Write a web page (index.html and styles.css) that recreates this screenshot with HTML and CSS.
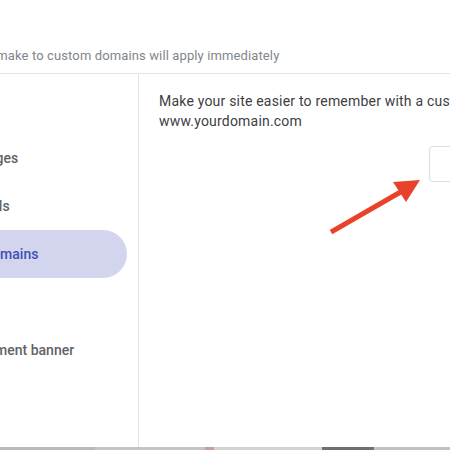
FILE: index.html
```html
<!DOCTYPE html>
<html lang="en">
<head>
<meta charset="utf-8">
<title>Custom domains</title>
<link rel="stylesheet" href="styles.css">
</head>
<body>
<div class="stage">
  <div class="dialog">
    <div class="dialog-header">
      <p class="notice">Changes you make to custom domains will apply immediately</p>
    </div>
    <div class="dialog-body">
      <nav class="sidebar">
        <a class="nav-item">Navigation</a>
        <a class="nav-item">Brand images</a>
        <a class="nav-item">Viewer tools</a>
        <a class="nav-item active">Custom domains</a>
        <a class="nav-item">Analytics</a>
        <a class="nav-item">Announcement banner</a>
      </nav>
      <section class="content">
        <p class="intro">Make your site easier to remember with a custom domain, like www.yourdomain.com</p>
        <div class="actions">
          <button class="setup-btn">Start setup</button>
        </div>
        <svg class="arrow" width="100" height="60" viewBox="0 0 100 60" aria-hidden="true">
          <line x1="1" y1="55" x2="74" y2="13" stroke="#e8432a" stroke-width="5" stroke-linecap="butt"/>
          <polygon points="90,3 63,5 76,25" fill="#e8432a"/>
        </svg>
      </section>
    </div>
  </div>
  <div class="backdrop-strip">
    <span class="seg seg-a"></span>
    <span class="seg seg-b"></span>
    <span class="seg seg-c"></span>
    <span class="seg seg-d"></span>
    <span class="seg seg-e"></span>
    <span class="seg seg-f"></span>
  </div>
</div>
</body>
</html>
```

FILE: styles.css
```css
html, body {
  margin: 0;
  padding: 0;
  width: 450px;
  height: 450px;
  overflow: hidden;
  background: #ffffff;
  font-family: Roboto, "Liberation Sans", Arial, sans-serif;
}

.stage {
  width: 450px;
  height: 450px;
  overflow: hidden;
  display: flex;
  flex-direction: column;
}

.dialog {
  flex: 0 0 447px;
  width: 667px;
  margin-left: -92px;
  background: #ffffff;
  display: flex;
  flex-direction: column;
}

.dialog-header {
  height: 74px;
  display: flex;
  align-items: flex-end;
  border-bottom: 1px solid #e3e3e3;
  box-sizing: border-box;
  padding-left: 9px;
}

.notice {
  margin: 0 0 8px 0;
  font-size: 13px;
  line-height: 18px;
  letter-spacing: 0.12px;
  color: #80868b;
  white-space: nowrap;
}

.dialog-body {
  flex: 1;
  display: flex;
}

.sidebar {
  width: 231px;
  flex: 0 0 231px;
  border-right: 1px solid #e3e3e3;
  box-sizing: border-box;
  padding-top: 12px;
  display: flex;
  flex-direction: column;
}

.nav-item {
  display: flex;
  align-items: center;
  height: 48px;
  margin-right: 11px;
  padding-left: 24px;
  border-radius: 0 24px 24px 0;
  font-size: 14px;
  font-weight: 500;
  color: #5f6368;
  white-space: nowrap;
  text-decoration: none;
}

.nav-item.active {
  background: #d3d4ee;
  color: #3f4fb5;
}

.content {
  position: relative;
  flex: 1;
  padding: 17px 24px 0 20px;
}

.intro {
  margin: 0;
  width: 410px;
  font-size: 14px;
  line-height: 20px;
  letter-spacing: 0.2px;
  color: #3c4043;
}

.actions {
  width: 392px;
  display: flex;
  justify-content: flex-end;
  margin-top: 15px;
}

.setup-btn {
  width: 122px;
  height: 36px;
  box-sizing: border-box;
  border: 1px solid #dadce0;
  border-radius: 4px;
  background: #ffffff;
  font-family: inherit;
  font-size: 14px;
  font-weight: 500;
  color: #1a73e8;
  text-align: right;
  padding: 0 20px 0 0;
}

.arrow {
  position: absolute;
  left: 191px;
  top: 103px;
}

.backdrop-strip {
  flex: 1;
  display: flex;
  background: #bcbcba;
}

.seg { display: block; height: 100%; }
.seg-a { width: 95px; background: #bababa; }
.seg-b { width: 110px; background: #c6c5c2; }
.seg-c { width: 9px; background: #c8a096; }
.seg-d { width: 108px; background: #d2d2d0; }
.seg-e { width: 52px; background: #6f6f6f; }
.seg-f { flex: 1; background: #c2c2c0; }
```
